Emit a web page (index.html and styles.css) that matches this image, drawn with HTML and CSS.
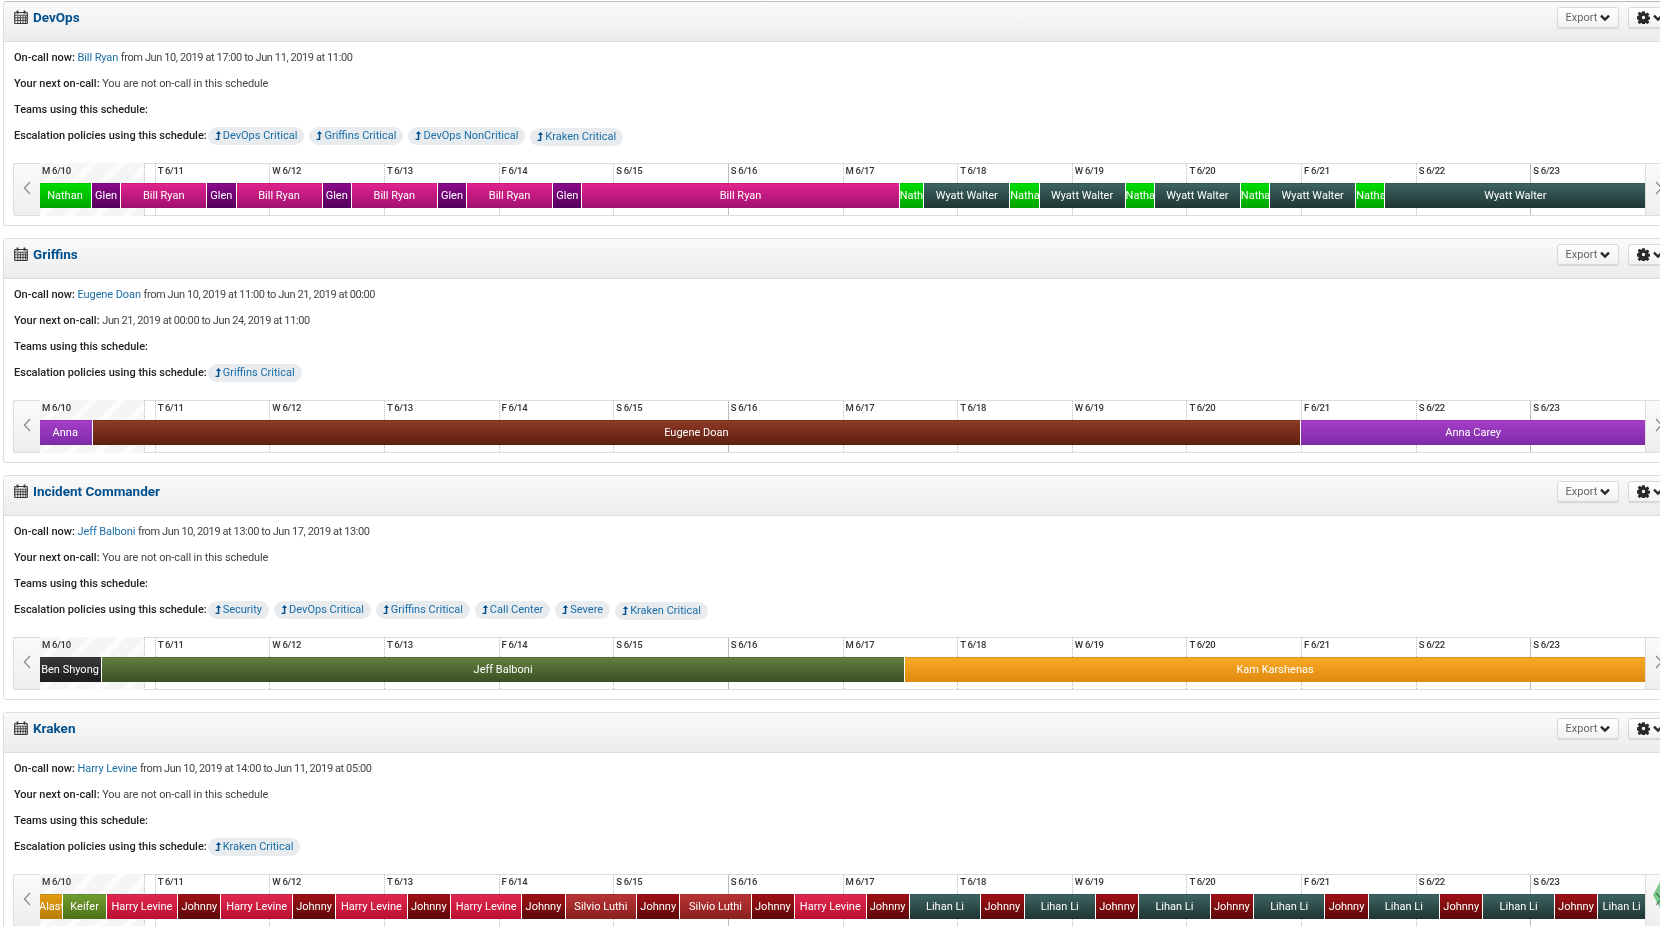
FILE: index.html
```html
<!DOCTYPE html>
<html>
<head>
    <meta charset="utf-8">
    <title>Schedules</title>
    <link rel="stylesheet" href="styles.css">
</head>
<body>
<svg class="sprites" width="0" height="0">
    <symbol id="cal" viewBox="0 0 14 14">
        <path d="M1.500 2.500h11a.8.8 0 0 1 .8.8v9.400a.8.8 0 0 1-.8.8h-11a.8.8 0 0 1-.8-.8V3.300a.8.8 0 0 1 .8-.8z" fill="none" stroke="currentColor" stroke-width="1.200"/>
        <path d="M1 5.200h12M1 7.800h12M1 10.400h12M3.800 5.200v8M6.400 5.200v8M9 5.200v8M11.400 5.200v8" fill="none" stroke="currentColor" stroke-width=".9"/>
        <path d="M3.500.5v3.200M10.500.5v3.200" fill="none" stroke="currentColor" stroke-width="1.800"/>
    </symbol>
    <symbol id="gear" viewBox="0 0 14 14">
        <path d="M5.600.3h2.800l.3 2 1 .4 1.600-1.200 2 2-1.200 1.600.4 1 2 .3v2.800l-2 .3-.4 1 1.200 1.600-2 2-1.600-1.200-1 .4-.3 2H5.600l-.3-2-1-.4-1.600 1.200-2-2 1.200-1.600-.4-1-2-.3V5.600l2-.3.4-1L.7 2.700l2-2 1.600 1.200 1-.4zM7 5.200a1.800 1.800 0 1 0 0 3.600 1.800 1.800 0 0 0 0-3.600z" fill="currentColor" fill-rule="evenodd"/>
    </symbol>
    <symbol id="chev" viewBox="0 0 10 8">
        <path d="M1 1.600 5 5.600 9 1.600" fill="none" stroke="currentColor" stroke-width="2.400"/>
    </symbol>
    <symbol id="up" viewBox="0 0 6 9">
        <path d="M2.800 2.500h1.500V9H2.800zM.5 7.800h2.500V9H.5z" fill="currentColor"/>
        <path d="M.9 3 3.500 0 6 3z" fill="currentColor"/>
    </symbol>
    <symbol id="left" viewBox="0 0 8 14">
        <path d="M7 1 1.400 7 7 13" fill="none" stroke="currentColor" stroke-width="1.200"/>
    </symbol>
    <symbol id="right" viewBox="0 0 8 14">
        <path d="M1 1 6.600 7 1 13" fill="none" stroke="currentColor" stroke-width="1.200"/>
    </symbol>
</svg>

<div class="panel">
    <div class="panel-head">
        <a class="title"><svg class="cal"><use href="#cal"/></svg>DevOps</a>
        <div class="actions">
            <button class="btn">Export <svg class="chev"><use href="#chev"/></svg></button>
            <button class="btn btn-gear"><svg class="gear"><use href="#gear"/></svg><svg class="chev"><use href="#chev"/></svg></button>
        </div>
    </div>
    <div class="panel-body">
        <p class="row"><b>On-call now:</b> <a>Bill Ryan</a> <span class="when">from Jun 10, 2019 at 17:00 to Jun 11, 2019 at 11:00</span></p>
        <p class="row"><b>Your next on-call:</b> You are not on-call in this schedule</p>
        <p class="row"><b>Teams using this schedule:</b></p>
        <div class="row policies"><b>Escalation policies using this schedule:</b>
            <a class="pill"><svg class="up"><use href="#up"/></svg>DevOps Critical</a>
            <a class="pill"><svg class="up"><use href="#up"/></svg>Griffins Critical</a>
            <a class="pill"><svg class="up"><use href="#up"/></svg>DevOps NonCritical</a>
            <a class="pill low"><svg class="up"><use href="#up"/></svg>Kraken Critical</a>
        </div>
        <div class="timeline">
            <div class="nav nav-prev"><svg class="arrow"><use href="#left"/></svg></div>
            <div class="track">
                <div class="past"></div>
                <div class="days">
                    <span>M 6/10</span><span>T 6/11</span><span>W 6/12</span><span>T 6/13</span><span>F 6/14</span><span>S 6/15</span><span class="week">S 6/16</span><span>M 6/17</span><span>T 6/18</span><span>W 6/19</span><span>T 6/20</span><span>F 6/21</span><span>S 6/22</span><span class="week">S 6/23</span>
                </div>
                <div class="bars">
                    <div class="bar c-nathan" style="flex-grow:11">Nathan</div><div class="bar c-glen" style="flex-grow:6">Glen</div><div class="bar c-bill" style="flex-grow:18">Bill Ryan</div><div class="bar c-glen" style="flex-grow:6">Glen</div><div class="bar c-bill" style="flex-grow:18">Bill Ryan</div><div class="bar c-glen" style="flex-grow:6">Glen</div><div class="bar c-bill" style="flex-grow:18">Bill Ryan</div><div class="bar c-glen" style="flex-grow:6">Glen</div><div class="bar c-bill" style="flex-grow:18">Bill Ryan</div><div class="bar c-glen" style="flex-grow:6">Glen</div><div class="bar c-bill" style="flex-grow:67">Bill Ryan</div><div class="bar c-nathan" style="flex-grow:5">Nathan</div><div class="bar c-wyatt" style="flex-grow:18">Wyatt Walter</div><div class="bar c-nathan" style="flex-grow:6">Nathan</div><div class="bar c-wyatt" style="flex-grow:18">Wyatt Walter</div><div class="bar c-nathan" style="flex-grow:6">Nathan</div><div class="bar c-wyatt" style="flex-grow:18">Wyatt Walter</div><div class="bar c-nathan" style="flex-grow:6">Nathan</div><div class="bar c-wyatt" style="flex-grow:18">Wyatt Walter</div><div class="bar c-nathan" style="flex-grow:6">Nathan</div><div class="bar c-wyatt" style="flex-grow:55">Wyatt Walter</div>
                </div>
            </div>
            <div class="nav nav-next"><svg class="arrow"><use href="#right"/></svg></div>
        </div>
    </div>
</div>

<div class="panel">
    <div class="panel-head">
        <a class="title"><svg class="cal"><use href="#cal"/></svg>Griffins</a>
        <div class="actions">
            <button class="btn">Export <svg class="chev"><use href="#chev"/></svg></button>
            <button class="btn btn-gear"><svg class="gear"><use href="#gear"/></svg><svg class="chev"><use href="#chev"/></svg></button>
        </div>
    </div>
    <div class="panel-body">
        <p class="row"><b>On-call now:</b> <a>Eugene Doan</a> <span class="when">from Jun 10, 2019 at 11:00 to Jun 21, 2019 at 00:00</span></p>
        <p class="row"><b>Your next on-call:</b> <span class="when">Jun 21, 2019 at 00:00 to Jun 24, 2019 at 11:00</span></p>
        <p class="row"><b>Teams using this schedule:</b></p>
        <div class="row policies"><b>Escalation policies using this schedule:</b>
            <a class="pill"><svg class="up"><use href="#up"/></svg>Griffins Critical</a>
        </div>
        <div class="timeline">
            <div class="nav nav-prev"><svg class="arrow"><use href="#left"/></svg></div>
            <div class="track">
                <div class="past"></div>
                <div class="days">
                    <span>M 6/10</span><span>T 6/11</span><span>W 6/12</span><span>T 6/13</span><span>F 6/14</span><span>S 6/15</span><span class="week">S 6/16</span><span>M 6/17</span><span>T 6/18</span><span>W 6/19</span><span>T 6/20</span><span>F 6/21</span><span>S 6/22</span><span class="week">S 6/23</span>
                </div>
                <div class="bars">
                    <div class="bar c-anna" style="flex-grow:11">Anna</div><div class="bar c-eugene" style="flex-grow:253">Eugene Doan</div><div class="bar c-anna" style="flex-grow:72">Anna Carey</div>
                </div>
            </div>
            <div class="nav nav-next"><svg class="arrow"><use href="#right"/></svg></div>
        </div>
    </div>
</div>

<div class="panel">
    <div class="panel-head">
        <a class="title"><svg class="cal"><use href="#cal"/></svg>Incident Commander</a>
        <div class="actions">
            <button class="btn">Export <svg class="chev"><use href="#chev"/></svg></button>
            <button class="btn btn-gear"><svg class="gear"><use href="#gear"/></svg><svg class="chev"><use href="#chev"/></svg></button>
        </div>
    </div>
    <div class="panel-body">
        <p class="row"><b>On-call now:</b> <a>Jeff Balboni</a> <span class="when">from Jun 10, 2019 at 13:00 to Jun 17, 2019 at 13:00</span></p>
        <p class="row"><b>Your next on-call:</b> You are not on-call in this schedule</p>
        <p class="row"><b>Teams using this schedule:</b></p>
        <div class="row policies"><b>Escalation policies using this schedule:</b>
            <a class="pill"><svg class="up"><use href="#up"/></svg>Security</a>
            <a class="pill"><svg class="up"><use href="#up"/></svg>DevOps Critical</a>
            <a class="pill"><svg class="up"><use href="#up"/></svg>Griffins Critical</a>
            <a class="pill"><svg class="up"><use href="#up"/></svg>Call Center</a>
            <a class="pill"><svg class="up"><use href="#up"/></svg>Severe</a>
            <a class="pill low"><svg class="up"><use href="#up"/></svg>Kraken Critical</a>
        </div>
        <div class="timeline">
            <div class="nav nav-prev"><svg class="arrow"><use href="#left"/></svg></div>
            <div class="track">
                <div class="past"></div>
                <div class="days">
                    <span>M 6/10</span><span>T 6/11</span><span>W 6/12</span><span>T 6/13</span><span>F 6/14</span><span>S 6/15</span><span class="week">S 6/16</span><span>M 6/17</span><span>T 6/18</span><span>W 6/19</span><span>T 6/20</span><span>F 6/21</span><span>S 6/22</span><span class="week">S 6/23</span>
                </div>
                <div class="bars">
                    <div class="bar c-ben" style="flex-grow:13">Ben Shyong</div><div class="bar c-jeff" style="flex-grow:168">Jeff Balboni</div><div class="bar c-kam" style="flex-grow:155">Kam Karshenas</div>
                </div>
            </div>
            <div class="nav nav-next"><svg class="arrow"><use href="#right"/></svg></div>
        </div>
    </div>
</div>

<div class="panel">
    <div class="panel-head">
        <a class="title"><svg class="cal"><use href="#cal"/></svg>Kraken</a>
        <div class="actions">
            <button class="btn">Export <svg class="chev"><use href="#chev"/></svg></button>
            <button class="btn btn-gear"><svg class="gear"><use href="#gear"/></svg><svg class="chev"><use href="#chev"/></svg></button>
        </div>
    </div>
    <div class="panel-body">
        <p class="row"><b>On-call now:</b> <a>Harry Levine</a> <span class="when">from Jun 10, 2019 at 14:00 to Jun 11, 2019 at 05:00</span></p>
        <p class="row"><b>Your next on-call:</b> You are not on-call in this schedule</p>
        <p class="row"><b>Teams using this schedule:</b></p>
        <div class="row policies"><b>Escalation policies using this schedule:</b>
            <a class="pill"><svg class="up"><use href="#up"/></svg>Kraken Critical</a>
        </div>
        <div class="timeline">
            <div class="nav nav-prev"><svg class="arrow"><use href="#left"/></svg></div>
            <div class="track">
                <div class="past"></div>
                <div class="days">
                    <span>M 6/10</span><span>T 6/11</span><span>W 6/12</span><span>T 6/13</span><span>F 6/14</span><span>S 6/15</span><span class="week">S 6/16</span><span>M 6/17</span><span>T 6/18</span><span>W 6/19</span><span>T 6/20</span><span>F 6/21</span><span>S 6/22</span><span class="week">S 6/23</span>
                </div>
                <div class="bars">
                    <div class="bar c-alast" style="flex-grow:5">Alast</div><div class="bar c-keifer" style="flex-grow:9">Keifer</div><div class="bar c-harry" style="flex-grow:15">Harry Levine</div><div class="bar c-johnny" style="flex-grow:9">Johnny</div><div class="bar c-harry" style="flex-grow:15">Harry Levine</div><div class="bar c-johnny" style="flex-grow:9">Johnny</div><div class="bar c-harry" style="flex-grow:15">Harry Levine</div><div class="bar c-johnny" style="flex-grow:9">Johnny</div><div class="bar c-harry" style="flex-grow:15">Harry Levine</div><div class="bar c-johnny" style="flex-grow:9">Johnny</div><div class="bar c-silvio" style="flex-grow:15">Silvio Luthi</div><div class="bar c-johnny" style="flex-grow:9">Johnny</div><div class="bar c-silvio" style="flex-grow:15">Silvio Luthi</div><div class="bar c-johnny" style="flex-grow:9">Johnny</div><div class="bar c-harry" style="flex-grow:15">Harry Levine</div><div class="bar c-johnny" style="flex-grow:9">Johnny</div><div class="bar c-lihan" style="flex-grow:15">Lihan Li</div><div class="bar c-johnny" style="flex-grow:9">Johnny</div><div class="bar c-lihan" style="flex-grow:15">Lihan Li</div><div class="bar c-johnny" style="flex-grow:9">Johnny</div><div class="bar c-lihan" style="flex-grow:15">Lihan Li</div><div class="bar c-johnny" style="flex-grow:9">Johnny</div><div class="bar c-lihan" style="flex-grow:15">Lihan Li</div><div class="bar c-johnny" style="flex-grow:9">Johnny</div><div class="bar c-lihan" style="flex-grow:15">Lihan Li</div><div class="bar c-johnny" style="flex-grow:9">Johnny</div><div class="bar c-lihan" style="flex-grow:15">Lihan Li</div><div class="bar c-johnny" style="flex-grow:9">Johnny</div><div class="bar c-lihan" style="flex-grow:10">Lihan Li</div>
                </div>
            </div>
            <div class="nav nav-next"><svg class="arrow"><use href="#right"/></svg></div>
        </div>
    </div>
</div>

<svg class="badge" viewBox="0 0 16 30"><path d="M8 0 16 15 8 30 0 15z" fill="#7fd193"/></svg>
</body>
</html>
```

FILE: styles.css
```css
html, body { height: 100%; overflow: hidden; }
body { margin: 0; padding: 1px 0 0 3px; width: 1700px; background: #fff; font-family: Roboto, "Liberation Sans", sans-serif; font-size: 11px; color: #444; }
a { color: #1a6ea8; }
.sprites { position: absolute; }
.badge { position: absolute; z-index: 2; left: 1653px; top: 880px; width: 16px; height: 30px; mix-blend-mode: multiply; }

.panel { width: 1690px; height: 225px; margin-bottom: 12px; border: 1px solid #ddd; border-radius: 3px; box-sizing: border-box; }
.panel:first-of-type { border-top-color: #bbb; }
.panel-head { height: 40px; display: flex; justify-content: space-between; padding: 6px 0 0 10px; box-sizing: border-box; background: linear-gradient(#fafafa, #ececec); border-bottom: 1px solid #ddd; }
.title { font-size: 13.5px; font-weight: 700; color: #00508f; display: flex; align-items: flex-start; line-height: 19px; }
.cal { width: 14px; height: 14px; margin: 2px 5px 0 0; color: #3a3a3a; }
.actions { display: flex; gap: 9px; width: 135px; margin-top: -1px; align-items: flex-start; flex-shrink: 0; }
.btn { height: 21px; width: 62px; padding: 0; flex-shrink: 0; border: 1px solid #d8d8d8; border-radius: 3px; background: linear-gradient(#fff, #f2f2f2); box-shadow: 0 1px 1px rgba(0,0,0,.12); font: 11px Roboto, sans-serif; color: #666; display: flex; align-items: center; justify-content: center; gap: 3px; }
.chev { width: 10px; height: 8px; color: #2a2a2a; }
.btn-gear { justify-content: flex-start; padding-left: 8px; gap: 3px; }
.gear { width: 13px; height: 13px; color: #2a2a2a; }

.panel-body { padding: 0 0 0 10px; }
.row { height: 26px; line-height: 26px; margin: 0; letter-spacing: -.1px; }
.row:first-child { margin-top: 2.5px; }
.row b { font-weight: 500; color: #222; letter-spacing: 0; }
.when { letter-spacing: -.4px; }
.policies { display: flex; align-items: center; gap: 5px; letter-spacing: 0; }
.policies b { margin-right: -4px; }
.pill { display: flex; align-items: center; height: 18px; padding: 0 7px; border-radius: 9px; background: #e9ecef; color: #1a6ea8; }
.pill.low { position: relative; top: 1px; }
.up { width: 6px; height: 9px; margin-right: 2px; color: #00508f; }

.timeline { display: flex; width: 1700px; height: 53px; margin-top: 14.5px; margin-left: -1px; }
.nav { position: relative; z-index: 1; width: 27px; flex-shrink: 0; background: linear-gradient(#fbfbfb, #eee); border: 1px solid #ddd; box-sizing: border-box; display: flex; justify-content: center; padding-top: 17px; border-radius: 3px 0 0 3px; }
.nav-prev { border-right: 0; }
.nav-next { border-right: 0; border-radius: 0; }
.arrow { width: 8px; height: 14px; color: #888; }
.track { position: relative; width: 1605px; flex-shrink: 0; border-top: 1px solid #ddd; border-bottom: 1px solid #ddd; box-sizing: border-box; }
.past { position: absolute; left: -27px; top: -1px; bottom: -1px; width: 131px; border-right: 1px dotted #bbb; background: repeating-linear-gradient(135deg, #f5f5f5 0 14px, #fcfcfc 14px 20px); }
.days { position: relative; display: grid; grid-template-columns: repeat(14, 1fr); height: 100%; }
.days span { padding: 1px 0 0 2px; font-size: 9.5px; letter-spacing: -.3px; font-weight: 500; line-height: 12px; border-left: 1px dotted #bbb; color: #333; }
.days span:first-child { border-left: 0; }
.days .week { border-left: 1px solid #bbb; }
.bars { position: absolute; left: -1px; right: 0; top: 19px; height: 25px; display: flex; }
.bar { flex: 1 1 0; min-width: 0; overflow: hidden; white-space: nowrap; text-align: center; line-height: 25px; font-size: 11px; color: #fff; border-right: 1px solid #fff; box-sizing: border-box; box-shadow: inset 0 1px rgba(0,0,0,.12); }
.bar:last-child { border-right: 0; }
.c-nathan { background: linear-gradient(#00de00, #00a400); }
.c-glen { background: linear-gradient(#8c0a8c, #52005a); }
.c-bill { background: linear-gradient(#e2248f, #a01070); }
.c-wyatt, .c-lihan { background: linear-gradient(#3e6563, #1f3533); }
.c-anna { background: linear-gradient(#a63fc9, #7d2ba5); }
.c-eugene { background: linear-gradient(#8f3a26, #5e1f10); }
.c-ben { background: linear-gradient(#3a3a3a, #1c1c1c); }
.c-jeff { background: linear-gradient(#638040, #3c4f22); }
.c-kam { background: linear-gradient(#f9aa25, #e08a10); }
.c-alast { background: linear-gradient(#e59c10, #b87c00); }
.c-keifer { background: linear-gradient(#70a030, #4e7018); }
.c-harry { background: linear-gradient(#e2284f, #b81030); }
.c-johnny { background: linear-gradient(#a21015, #5a0a0a); }
.c-silvio { background: linear-gradient(#ba3535, #8a1f1f); }
```
